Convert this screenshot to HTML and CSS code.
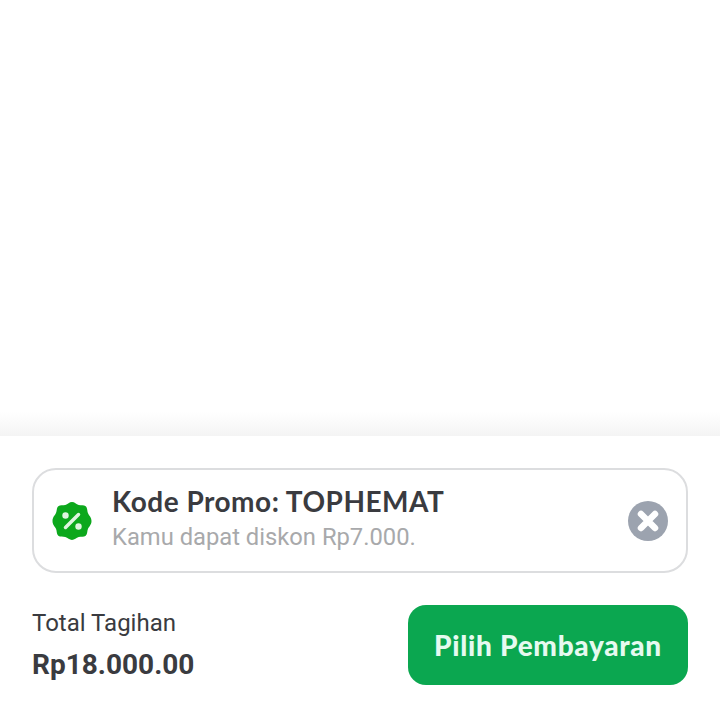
FILE: index.html
```html
<!DOCTYPE html>
<html lang="en">
<head>
    <meta charset="UTF-8">
    <title>Pilih Pembayaran</title>
    <link rel="stylesheet" href="styles.css">
</head>
<body>

    <div class="content"></div>

    <div class="sheet">
        <div class="promo">
            <svg class="promo-icon" viewBox="0 0 40 40">
                <path fill="#0ca81c" d="M20 1c2.600 0 4.300 2.300 6.700 2.900 2.400.7 5.100-.3 7 1.400 1.900 1.800 1.300 4.600 2.300 6.900.9 2.300 3.500 3.800 3.500 7.800s-2.600 5.500-3.500 7.800c-1 2.300-.4 5.100-2.300 6.900-1.900 1.700-4.600.7-7 1.400-2.400.6-4.100 2.900-6.700 2.900s-4.300-2.300-6.700-2.900c-2.400-.7-5.100.3-7-1.400-1.900-1.800-1.300-4.600-2.300-6.900C3.100 25.600.5 24 .5 20s2.600-5.700 3.500-8c1-2.300.4-5 2.300-6.700 1.900-1.700 4.600-.7 7-1.400C15.700 3.300 17.400 1 20 1z"/>
                <path stroke="#dff5e0" stroke-width="3.500" stroke-linecap="round" d="M13.500 26.500l13-13"/>
                <circle fill="#dff5e0" cx="13.500" cy="14.500" r="3.200"/>
                <circle fill="#dff5e0" cx="26.500" cy="25.500" r="3.200"/>
            </svg>
            <div class="promo-text">
                <div class="promo-title">Kode Promo: TOPHEMAT</div>
                <div class="promo-desc">Kamu dapat diskon Rp7.000.</div>
            </div>
            <svg class="promo-close" viewBox="0 0 40 40">
                <circle fill="#9ca3af" cx="20" cy="20" r="20"/>
                <path stroke="#fff" stroke-width="6.500" stroke-linecap="round" d="M13 13l14 14M27 13L13 27"/>
            </svg>
        </div>

        <div class="checkout">
            <div>
                <div class="total-label">Total Tagihan</div>
                <div class="total-value">Rp18.000.00</div>
            </div>
            <button class="pay-btn">Pilih Pembayaran</button>
        </div>
    </div>

</body>
</html>
```

FILE: styles.css
```css
* {
    margin: 0;
    padding: 0;
    box-sizing: border-box;
}
body {
    height: 719px;
    background: #fff;
    font-family: Roboto, Arial, sans-serif;
    color: #3a3b40;
    overflow: hidden;
}
.content {
    height: 436px;
    background: linear-gradient(#fff 412px, #f4f4f4 436px);
}
.sheet {
    padding: 32px 32px 0;
}
.promo {
    display: flex;
    align-items: center;
    height: 105px;
    padding: 0 18px;
    border: 2px solid #dcdddf;
    border-radius: 24px;
}
.promo-icon {
    width: 40px;
    height: 40px;
    margin-right: 20px;
}
.promo-text {
    flex: 1;
}
.promo-title {
    font-family: Lato, Arial, sans-serif;
    font-size: 28px;
    font-weight: 700;
    line-height: 33px;
    letter-spacing: .5px;
    margin-top: -1px;
    margin-bottom: 2px;
}
.promo-desc {
    font-size: 23.75px;
    line-height: 35px;
    color: #a8a9ab;
}
.promo-close {
    width: 40px;
    height: 40px;
}
.checkout {
    display: flex;
    justify-content: space-between;
    align-items: center;
    margin-top: 32px;
}
.total-label {
    font-size: 24px;
    line-height: 36px;
    margin-top: -2px;
}
.total-value {
    margin-top: 6px;
    font-size: 28px;
    font-weight: 700;
    line-height: 36px;
}
.pay-btn {
    width: 280px;
    height: 80px;
    border: none;
    border-radius: 18px;
    background: #0ba750;
    color: #e6faf0;
    font-family: Lato, Arial, sans-serif;
    font-size: 28px;
    font-weight: 900;
    letter-spacing: .7px;
}
```
